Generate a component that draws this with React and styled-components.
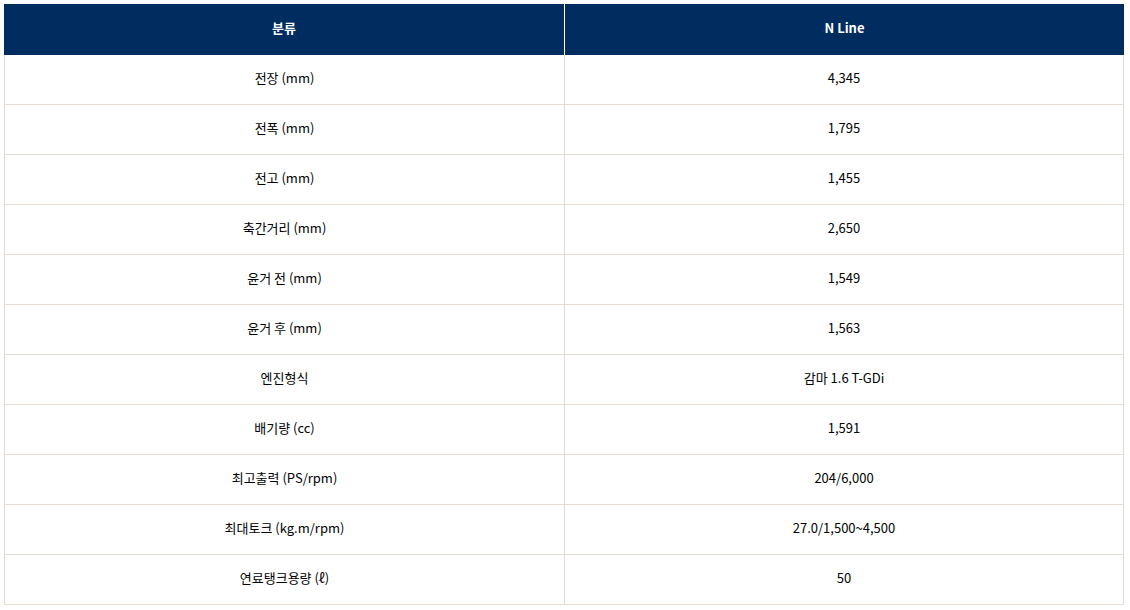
import styled, { createGlobalStyle } from "styled-components";

const GlobalStyle = createGlobalStyle`
  body {
    margin: 4px;
    background: #fff;
    font-family: "Noto Sans CJK KR", "Noto Sans", sans-serif;
  }
`;

const specs = [
  ["전장 (mm)", "4,345"],
  ["전폭 (mm)", "1,795"],
  ["전고 (mm)", "1,455"],
  ["축간거리 (mm)", "2,650"],
  ["윤거 전 (mm)", "1,549"],
  ["윤거 후 (mm)", "1,563"],
  ["엔진형식", "감마 1.6 T-GDi"],
  ["배기량 (cc)", "1,591"],
  ["최고출력 (PS/rpm)", "204/6,000"],
  ["최대토크 (kg.m/rpm)", "27.0/1,500~4,500"],
  ["연료탱크용량 (ℓ)", "50"],
];

const App = () => {
  return (
    <>
      <GlobalStyle />
      <Table>
        <HeadRow>
          <HeadCell>분류</HeadCell>
          <HeadCell $divider>N Line</HeadCell>
        </HeadRow>
        {specs.map(([label, value]) => (
          <Row key={label}>
            <Cell>{label}</Cell>
            <Cell $divider>{value}</Cell>
          </Row>
        ))}
      </Table>
    </>
  );
};

const Table = styled.div`
  width: 1120px;
  display: flex;
  flex-direction: column;
`;

const HeadRow = styled.div`
  display: grid;
  grid-template-columns: 560px 560px;
  height: 51px;
  background: #002c5f;
`;

const HeadCell = styled.div`
  display: flex;
  align-items: center;
  justify-content: center;
  color: #fff;
  font-size: 13px;
  font-weight: 700;
  padding-bottom: 4px;
  border-left: ${(p) => (p.$divider ? "1px solid #fff" : "none")};
`;

const Row = styled.div`
  display: grid;
  grid-template-columns: 559px 559px;
  height: 50px;
  box-sizing: border-box;
  border-bottom: 1px solid #e5ddd3;
  border-left: 1px solid #e5ddd3;
  border-right: 1px solid #e5ddd3;
`;

const Cell = styled.div`
  display: flex;
  align-items: center;
  justify-content: center;
  color: #000;
  font-size: 13px;
  padding-bottom: 4px;
  border-left: ${(p) => (p.$divider ? "1px solid #e5ddd3" : "none")};
`;

export default App;
